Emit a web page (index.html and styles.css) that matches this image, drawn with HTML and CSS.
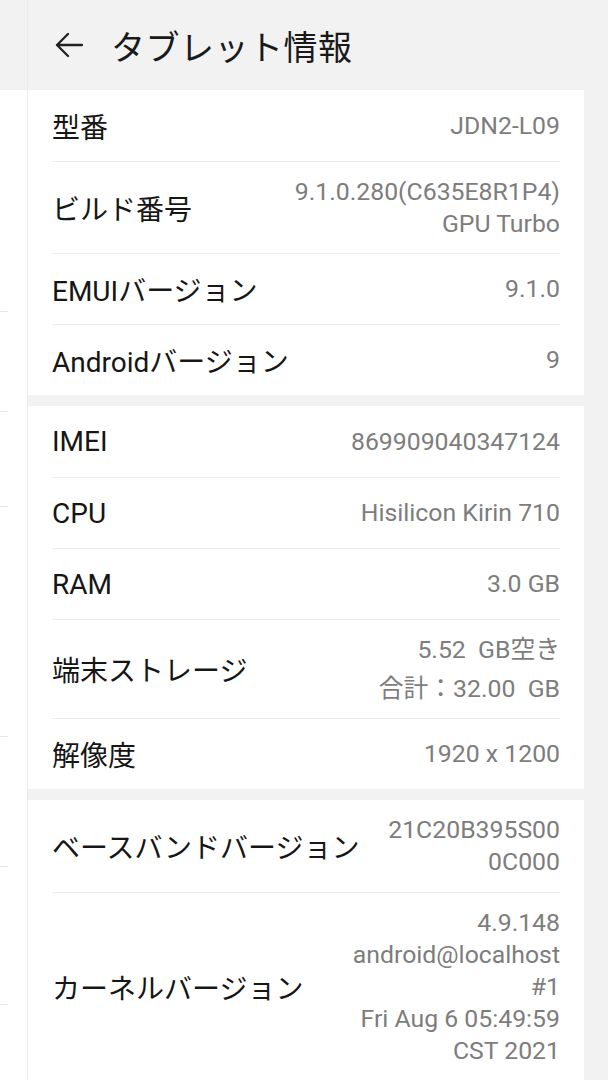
FILE: index.html
```html
<!DOCTYPE html>
<html lang="ja">
<head>
    <meta charset="UTF-8">
    <meta name="viewport" content="width=device-width, initial-scale=1.0">
    <title>タブレット情報</title>
    <link rel="stylesheet" href="styles.css">
</head>
<body>
    <div class="side">
        <div class="side-head"></div>
        <div class="side-item s1"></div>
        <div class="side-item s2"></div>
        <div class="side-item s3"></div>
        <div class="side-item s4"></div>
        <div class="side-item s5"></div>
        <div class="side-item s6"></div>
    </div>
    <div class="main">
        <div class="header">
            <svg class="back" width="28" height="28" viewBox="0 0 28 28">
                <path d="M27 14 H2 M13 3 L2 14 L13 25" fill="none" stroke="#222" stroke-width="2.3" stroke-linecap="round" stroke-linejoin="round"/>
            </svg>
            <span class="title">タブレット情報</span>
        </div>

        <div class="card">
            <div class="row">
                <span class="label">型番</span>
                <span class="value">JDN2-L09</span>
            </div>
            <div class="row tall">
                <span class="label">ビルド番号</span>
                <span class="value">9.1.0.280(C635E8R1P4)<br>GPU Turbo</span>
            </div>
            <div class="row">
                <span class="label">EMUIバージョン</span>
                <span class="value">9.1.0</span>
            </div>
            <div class="row">
                <span class="label">Androidバージョン</span>
                <span class="value">9</span>
            </div>
        </div>

        <div class="card">
            <div class="row">
                <span class="label">IMEI</span>
                <span class="value">869909040347124</span>
            </div>
            <div class="row">
                <span class="label">CPU</span>
                <span class="value">Hisilicon Kirin 710</span>
            </div>
            <div class="row">
                <span class="label">RAM</span>
                <span class="value">3.0 GB</span>
            </div>
            <div class="row storage">
                <span class="label">端末ストレージ</span>
                <span class="value">5.52&nbsp; GB空き<br>合計：32.00&nbsp; GB</span>
            </div>
            <div class="row">
                <span class="label">解像度</span>
                <span class="value">1920 x 1200</span>
            </div>
        </div>

        <div class="card last">
            <div class="row tall">
                <span class="label">ベースバンドバージョン</span>
                <span class="value">21C20B395S00<br>0C000</span>
            </div>
            <div class="row kernel">
                <span class="label">カーネルバージョン</span>
                <span class="value">4.9.148<br>android@localhost<br>#1<br>Fri Aug 6 05:49:59<br>CST 2021</span>
            </div>
        </div>
    </div>
</body>
</html>
```

FILE: styles.css
```css
body {
    margin: 0;
    font-family: Roboto, "Noto Sans CJK JP", sans-serif;
    display: flex;
    height: 1080px;
    overflow: hidden;
    background: #f2f2f2;
}
.side {
    width: 27px;
    flex-shrink: 0;
    background: #fff;
    border-right: 1px solid #ebebeb;
}
.side-head {
    height: 90px;
    background: #f2f2f2;
}
.side-item {
    margin-right: 19px;
    border-bottom: 1px solid #e6e6e6;
}
.s1 { height: 221px; }
.s2 { height: 99px; }
.s3 { height: 94px; }
.s4 { height: 229px; }
.s5 { height: 129px; }
.s6 { height: 137px; }
.main {
    flex: 1;
    padding-right: 24px;
    display: flex;
    flex-direction: column;
}
.header {
    height: 90px;
    flex-shrink: 0;
    display: flex;
    align-items: center;
    padding-left: 27px;
    gap: 28px;
}
.title {
    font-size: 34px;
    color: #1a1a1a;
    letter-spacing: 0.5px;
}
.card {
    background: #fff;
    flex-shrink: 0;
}
.card + .card {
    margin-top: 11px;
}
.card.last {
    flex-grow: 1;
}
.row {
    box-sizing: border-box;
    margin: 0 24px;
    height: 71px;
    display: flex;
    justify-content: space-between;
    align-items: center;
    gap: 24px;
    border-top: 1px solid #ececec;
}
.row:first-child {
    border-top: none;
}
.row.tall {
    height: 92px;
}
.row.storage {
    height: 99px;
}
.row.kernel {
    height: auto;
    padding: 14px 0 13px;
}
.label {
    font-size: 28px;
    color: #161616;
    white-space: nowrap;
}
.value {
    font-size: 24.8px;
    line-height: 32px;
    color: #7d7d7d;
    text-align: right;
}
.storage .value {
    line-height: 39px;
}
```
